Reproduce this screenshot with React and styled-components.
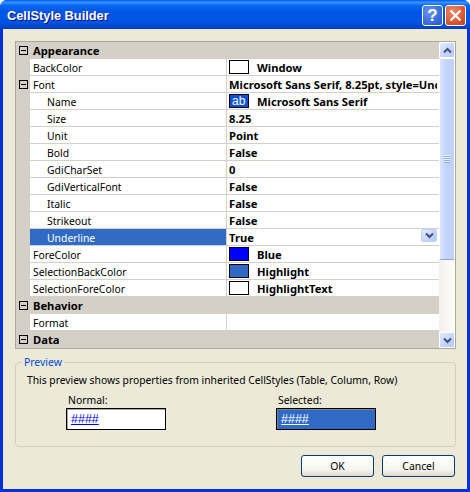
import React from "react";
import styled, { createGlobalStyle } from "styled-components";

const GlobalStyle = createGlobalStyle`
  html, body {
    margin: 0;
    padding: 0;
    background: #ffffff;
  }
  * {
    box-sizing: border-box;
  }
`;

const rows = [
  { kind: "category", label: "Appearance", first: true },
  { label: "BackColor", value: "Window", swatch: "#ffffff" },
  { label: "Font", value: "Microsoft Sans Serif, 8.25pt, style=Underline", expander: true },
  { label: "Name", value: "Microsoft Sans Serif", sub: true, fontSwatch: true },
  { label: "Size", value: "8.25", sub: true },
  { label: "Unit", value: "Point", sub: true },
  { label: "Bold", value: "False", sub: true },
  { label: "GdiCharSet", value: "0", sub: true },
  { label: "GdiVerticalFont", value: "False", sub: true },
  { label: "Italic", value: "False", sub: true },
  { label: "Strikeout", value: "False", sub: true },
  { label: "Underline", value: "True", sub: true, selected: true },
  { label: "ForeColor", value: "Blue", swatch: "#0000ff" },
  { label: "SelectionBackColor", value: "Highlight", swatch: "#316ac5" },
  { label: "SelectionForeColor", value: "HighlightText", swatch: "#ffffff" },
  { kind: "category", label: "Behavior" },
  { label: "Format", value: "" },
  { kind: "category", label: "Data", last: true },
];

function Chevron({ up }) {
  return (
    <svg width="9" height="7" viewBox="0 0 9 7">
      <path
        d={up ? "M1 5.5 L4.5 2 L8 5.5" : "M1 1.5 L4.5 5 L8 1.5"}
        fill="none"
        stroke="#3f5177"
        strokeWidth="2"
      />
    </svg>
  );
}

function Minus() {
  return (
    <MinusBox>
      <svg width="5" height="1" viewBox="0 0 5 1">
        <rect width="5" height="1" fill="#000" />
      </svg>
    </MinusBox>
  );
}

export default function App() {
  return (
    <Win>
      <GlobalStyle />
      <TitleBar>
        <TitleText>CellStyle Builder</TitleText>
        <TitleButton>
          <HelpMark>?</HelpMark>
        </TitleButton>
        <TitleButton $close>
          <svg width="13" height="13" viewBox="0 0 13 13">
            <path d="M1.5 1.5 L11.5 11.5 M11.5 1.5 L1.5 11.5" stroke="#fff" strokeWidth="2.2" fill="none" />
          </svg>
        </TitleButton>
      </TitleBar>
      <Client>
        <Grid>
          <GridRows>
            {rows.map((row) =>
              row.kind === "category" ? (
                <CategoryRow key={row.label} $last={row.last}>
                  <Gutter>
                    <Minus />
                  </Gutter>
                  <CategoryLabel $first={row.first}>{row.label}</CategoryLabel>
                </CategoryRow>
              ) : (
                <PropRow key={row.label}>
                  <Gutter>{row.expander && <Minus />}</Gutter>
                  <LabelCell $sub={row.sub} $selected={row.selected}>
                    {row.label}
                  </LabelCell>
                  <ValueCell>
                    {row.swatch && <Swatch $color={row.swatch} />}
                    {row.fontSwatch && (
                      <FontSwatch>
                        <span>ab</span>
                      </FontSwatch>
                    )}
                    <ValueText $indented={row.swatch || row.fontSwatch}>{row.value}</ValueText>
                    {row.selected && (
                      <DropButton>
                        <Chevron />
                      </DropButton>
                    )}
                  </ValueCell>
                </PropRow>
              )
            )}
          </GridRows>
          <ScrollBar>
            <ScrollButton>
              <Chevron up />
            </ScrollButton>
            <ScrollThumb>
              <Grip />
            </ScrollThumb>
            <ScrollTrack />
            <ScrollButton>
              <Chevron />
            </ScrollButton>
          </ScrollBar>
        </Grid>
        <PreviewGroup>
          <PreviewLegend>Preview</PreviewLegend>
          <PreviewNote>This preview shows properties from inherited CellStyles (Table, Column, Row)</PreviewNote>
          <PreviewColumns>
            <PreviewColumn>
              <PreviewCaption>Normal:</PreviewCaption>
              <PreviewBox>
                <PreviewLink>####</PreviewLink>
              </PreviewBox>
            </PreviewColumn>
            <PreviewColumn>
              <PreviewCaption>Selected:</PreviewCaption>
              <PreviewBox $selected>
                <PreviewLink $selected>####</PreviewLink>
              </PreviewBox>
            </PreviewColumn>
          </PreviewColumns>
        </PreviewGroup>
        <ButtonRow>
          <DialogButton>OK</DialogButton>
          <DialogButton>Cancel</DialogButton>
        </ButtonRow>
      </Client>
    </Win>
  );
}

const Win = styled.div`
  width: 470px;
  height: 492px;
  display: flex;
  flex-direction: column;
  overflow: hidden;
  border-radius: 7px 7px 0 0;
  background: #0831d9;
  font-family: "Noto Sans", "Liberation Sans", sans-serif;
  font-size: 10.4px;
  color: #000;
`;

const TitleBar = styled.div`
  height: 29px;
  flex: none;
  display: flex;
  align-items: center;
  gap: 2px;
  padding: 2px 4px 0 7px;
  background: linear-gradient(
    180deg,
    #0058ee 0%,
    #3a93ff 8%,
    #0a6af4 18%,
    #0055e5 40%,
    #0055e5 75%,
    #0048d0 90%,
    #003dba 100%
  );
`;

const TitleText = styled.div`
  flex: 1;
  color: #fff;
  font: bold 12.8px "Liberation Sans", Arial, sans-serif;
  text-shadow: 1px 1px 0 #0f1089;
`;

const TitleButton = styled.div`
  width: 21px;
  height: 21px;
  display: flex;
  align-items: center;
  justify-content: center;
  border: 1px solid #fff;
  border-radius: 3px;
  background: ${(p) =>
    p.$close
      ? "radial-gradient(circle at 35% 30%, #eb8d70 0%, #de5b33 55%, #c5391a 100%)"
      : "radial-gradient(circle at 35% 30%, #6c97ec 0%, #3c6fdd 55%, #2a56c4 100%)"};
`;

const HelpMark = styled.span`
  color: #fff;
  font: bold 17px "Liberation Sans", Arial, sans-serif;
`;

const Client = styled.div`
  flex: 1;
  margin: 0 3px 3px;
  padding: 12px 12px 0;
  display: flex;
  flex-direction: column;
  background: #ece9d8;
`;

const Grid = styled.div`
  width: 441px;
  height: 308px;
  flex: none;
  display: flex;
  border: 1px solid #aca899;
  background: #fff;
`;

const GridRows = styled.div`
  width: 423px;
  flex: none;
  display: flex;
  flex-direction: column;
`;

const CategoryRow = styled.div`
  height: 17px;
  flex: none;
  display: flex;
  background: #d4d0c8;
`;

const PropRow = styled.div`
  height: 17px;
  flex: none;
  display: flex;
  background: #fff;
`;

const Gutter = styled.div`
  width: 14px;
  flex: none;
  display: flex;
  align-items: center;
  justify-content: center;
  background: #d4d0c8;
`;

const MinusBox = styled.div`
  width: 9px;
  height: 9px;
  display: flex;
  align-items: center;
  justify-content: center;
  border: 1px solid #000;
  background: transparent;
`;

const CategoryLabel = styled.div`
  padding-left: 3px;
  line-height: 18px;
  font-weight: bold;
  font-size: 11.2px;
`;

const LabelCell = styled.div`
  width: 197px;
  flex: none;
  padding: 1px 0 0 ${(p) => (p.$sub ? "17px" : "3px")};
  line-height: 17px;
  white-space: nowrap;
  overflow: hidden;
  border-bottom: 1px solid #d4d0c8;
  border-right: 1px solid #d4d0c8;
  background: ${(p) => (p.$selected ? "#316ac5" : "#fff")};
  color: ${(p) => (p.$selected ? "#fff" : "#000")};
`;

const ValueCell = styled.div`
  flex: 1;
  min-width: 0;
  display: flex;
  align-items: flex-start;
  overflow: hidden;
  padding: 1px 2px 0 2px;
  border-bottom: 1px solid #d4d0c8;
`;

const Swatch = styled.div`
  width: 20px;
  height: 14px;
  flex: none;
  border: 1px solid #000;
  background: ${(p) => p.$color};
`;

const FontSwatch = styled(Swatch)`
  position: relative;
  background: #0a51d6;
  color: #fff;
  font: 12px "Liberation Sans", Arial, sans-serif;
  line-height: 13px;
  overflow: hidden;
  span {
    padding-left: 2px;
  }
`;

const ValueText = styled.div`
  flex: 1;
  min-width: 0;
  padding-left: ${(p) => (p.$indented ? "8px" : "0")};
  line-height: 16px;
  font-weight: bold;
  font-size: 11.2px;
  white-space: nowrap;
  overflow: hidden;
`;

const DropButton = styled.div`
  width: 16px;
  height: 13px;
  flex: none;
  margin-top: -1px;
  display: flex;
  align-items: center;
  justify-content: center;
  border-radius: 2px;
  border: 1px solid #bdd0f5;
  background: linear-gradient(135deg, #e3ecfd 0%, #c3d3fd 60%, #b4c7f5 100%);
`;

const ScrollBar = styled.div`
  flex: 1;
  display: flex;
  flex-direction: column;
  background: #f5f4ee;
`;

const ScrollButton = styled.div`
  height: 16px;
  flex: none;
  display: flex;
  align-items: center;
  justify-content: center;
  border: 1px solid #fff;
  border-radius: 2px;
  background: linear-gradient(135deg, #e3ecfd 0%, #c3d3fd 60%, #b4c7f5 100%);
`;

const ScrollThumb = styled.div`
  height: 202px;
  flex: none;
  display: flex;
  align-items: center;
  justify-content: center;
  border: 1px solid #fff;
  border-bottom-color: #8ea5d9;
  border-radius: 2px;
  background: linear-gradient(90deg, #dbe5fd 0%, #c4d4fc 40%, #c0d0fa 100%);
`;

const Grip = styled.div`
  width: 6px;
  height: 8px;
  background: repeating-linear-gradient(180deg, #eef3fe 0 1px, #8faae6 1px 2px);
`;

const ScrollTrack = styled.div`
  flex: 1;
  background: linear-gradient(90deg, #f3f1ec 0%, #fefefb 100%);
`;

const PreviewGroup = styled.fieldset`
  width: 441px;
  height: 92px;
  flex: none;
  margin: 6px 0 0;
  padding: 4px 11px 0;
  border: 1px solid #d0d0bf;
  border-radius: 4px;
`;

const PreviewLegend = styled.legend`
  margin-left: -5px;
  padding: 0 2px;
  color: #0046d5;
  font-size: 10.4px;
`;

const PreviewNote = styled.div`
  line-height: 14px;
  font-size: 10.3px;
  white-space: nowrap;
`;

const PreviewColumns = styled.div`
  display: flex;
  gap: 110px;
  margin-top: 7px;
  padding-left: 39px;
`;

const PreviewColumn = styled.div`
  width: 100px;
  display: flex;
  flex-direction: column;
`;

const PreviewCaption = styled.div`
  padding-left: 2px;
  line-height: 13px;
  margin-bottom: 1px;
`;

const PreviewBox = styled.div`
  height: 22px;
  padding-left: 4px;
  display: flex;
  align-items: center;
  border: 1px solid #000;
  box-shadow: inset 1px 1px 0 ${(p) => (p.$selected ? "#808080" : "#aca899")};
  background: ${(p) => (p.$selected ? "#316ac5" : "#fff")};
`;

const PreviewLink = styled.span`
  color: ${(p) => (p.$selected ? "#fff" : "#0000ff")};
  font: 12.5px "Liberation Sans", Arial, sans-serif;
  text-decoration: underline;
`;

const ButtonRow = styled.div`
  display: flex;
  justify-content: flex-end;
  gap: 8px;
  margin-top: 8px;
`;

const DialogButton = styled.div`
  width: 73px;
  height: 22px;
  display: flex;
  align-items: center;
  justify-content: center;
  border: 1px solid #003c74;
  border-radius: 3px;
  background: linear-gradient(180deg, #ffffff 0%, #f5f5ef 70%, #dcd8ca 100%);
`;
